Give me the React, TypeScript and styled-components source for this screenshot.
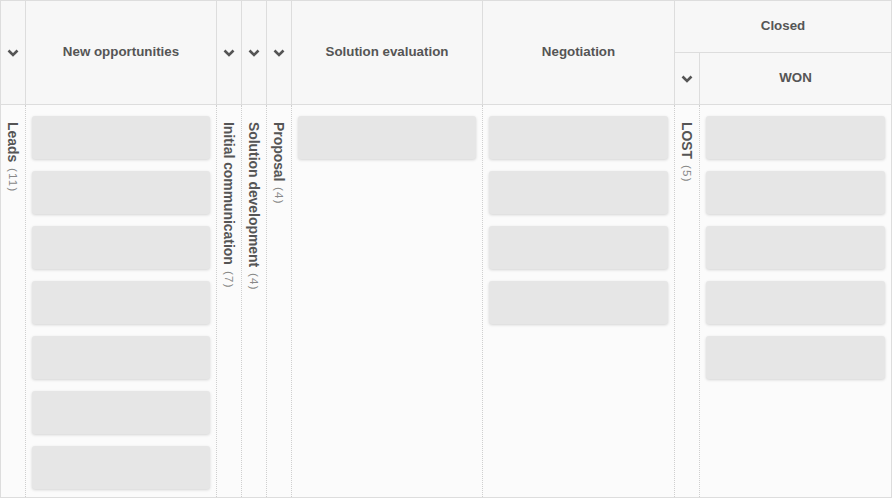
import React from "react";
import styled, { createGlobalStyle } from "styled-components";

const Global = createGlobalStyle`
  html, body { margin: 0; padding: 0; background: #fff; }
  * { box-sizing: border-box; }
`;

const Board = styled.div`
  width: 892px;
  height: 498px;
  border: 1px solid #dddddd;
  display: grid;
  grid-template-columns: 25px 191px 25px 25px 25px 191px 192px 25px 191px;
  grid-template-rows: 52px 52px 1fr;
  font-family: "Liberation Sans", Arial, sans-serif;
  background: #fbfbfb;
  overflow: hidden;
`;

const HeaderCell = styled.div<{ $col: string; $row: string; $last?: boolean }>`
  grid-column: ${(p) => p.$col};
  grid-row: ${(p) => p.$row};
  background: #f7f7f7;
  border-right: ${(p) => (p.$last ? "none" : "1px solid #dddddd")};
  border-bottom: 1px solid #dddddd;
  display: flex;
  align-items: center;
  justify-content: center;
  color: #555555;
  font-weight: bold;
  font-size: 13.33px;
`;

const HeaderText = styled.span`
  padding-bottom: 2px;
`;

const BodyCell = styled.div<{ $last?: boolean; $collapsed?: boolean }>`
  grid-row: 3;
  border-right: ${(p) => (p.$last ? "none" : "1px dotted #cfcfcf")};
  display: flex;
  flex-direction: column;
  align-items: ${(p) => (p.$collapsed ? "center" : "stretch")};
  padding: ${(p) => (p.$collapsed ? "17px 0 0 0" : "11px 6px 0 6px")};
  gap: 12px;
  overflow: hidden;
`;

const Card = styled.div`
  height: 43px;
  flex: none;
  background: #e6e6e6;
  border-radius: 3px;
  box-shadow: 0 1px 3px rgba(0, 0, 0, 0.16);
`;

const VerticalLabel = styled.div`
  writing-mode: vertical-rl;
  white-space: nowrap;
  color: #555555;
  font-weight: bold;
  font-size: 13.9px;
  line-height: 16px;
`;

const Count = styled.span`
  font-weight: normal;
  font-size: 11.5px;
  color: #888888;
  letter-spacing: 1.2px;
  margin-top: 2px;
  display: inline-block;
`;

const Chevron = () => (
  <svg width="12" height="8" viewBox="0 0 12 8">
    <polyline
      points="1.5,1.5 6,6 10.5,1.5"
      fill="none"
      stroke="#555555"
      strokeWidth="2.6"
      strokeLinecap="butt"
      strokeLinejoin="miter"
    />
  </svg>
);

const Cards = ({ n }: { n: number }) => (
  <>
    {Array.from({ length: n }).map((_, i) => (
      <Card key={i} />
    ))}
  </>
);

const Collapsed = ({ title, count }: { title: string; count: number }) => (
  <BodyCell $collapsed>
    <VerticalLabel>
      {title} <Count>({count})</Count>
    </VerticalLabel>
  </BodyCell>
);

export default function App() {
  return (
    <>
      <Global />
      <Board>
        <HeaderCell $col="1" $row="1 / 3">
          <Chevron />
        </HeaderCell>
        <HeaderCell $col="2" $row="1 / 3">
          <HeaderText>New opportunities</HeaderText>
        </HeaderCell>
        <HeaderCell $col="3" $row="1 / 3">
          <Chevron />
        </HeaderCell>
        <HeaderCell $col="4" $row="1 / 3">
          <Chevron />
        </HeaderCell>
        <HeaderCell $col="5" $row="1 / 3">
          <Chevron />
        </HeaderCell>
        <HeaderCell $col="6" $row="1 / 3">
          <HeaderText>Solution evaluation</HeaderText>
        </HeaderCell>
        <HeaderCell $col="7" $row="1 / 3">
          <HeaderText>Negotiation</HeaderText>
        </HeaderCell>
        <HeaderCell $col="8 / 10" $row="1" $last>
          <HeaderText>Closed</HeaderText>
        </HeaderCell>
        <HeaderCell $col="8" $row="2">
          <Chevron />
        </HeaderCell>
        <HeaderCell $col="9" $row="2" $last>
          <HeaderText>WON</HeaderText>
        </HeaderCell>

        <Collapsed title="Leads" count={11} />
        <BodyCell>
          <Cards n={7} />
        </BodyCell>
        <Collapsed title="Initial communication" count={7} />
        <Collapsed title="Solution development" count={4} />
        <Collapsed title="Proposal" count={4} />
        <BodyCell>
          <Cards n={1} />
        </BodyCell>
        <BodyCell>
          <Cards n={4} />
        </BodyCell>
        <Collapsed title="LOST" count={5} />
        <BodyCell $last>
          <Cards n={5} />
        </BodyCell>
      </Board>
    </>
  );
}
